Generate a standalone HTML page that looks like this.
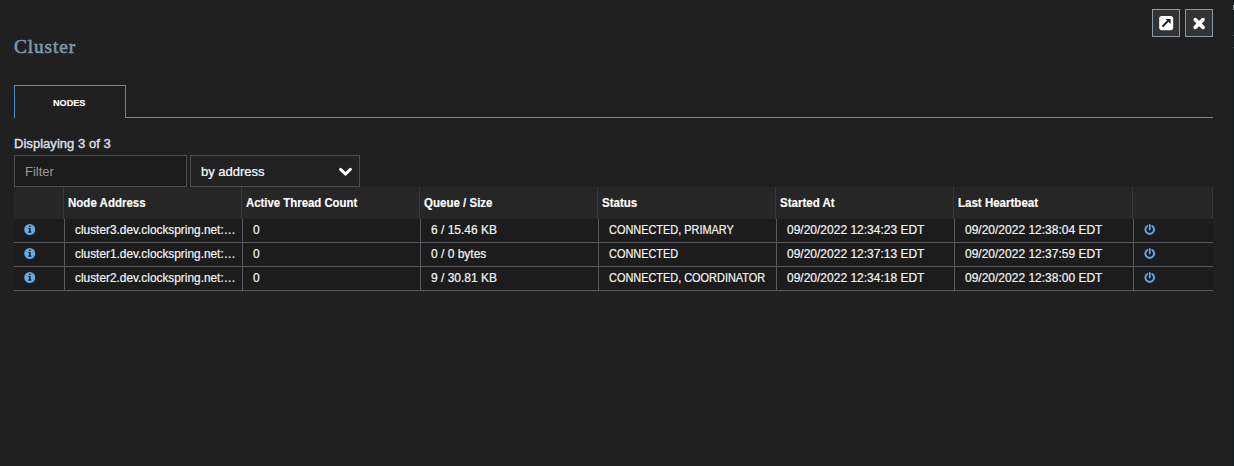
<!DOCTYPE html>
<html><head><meta charset="utf-8">
<style>
*{margin:0;padding:0;box-sizing:border-box}
html,body{width:1234px;height:466px;overflow:hidden;background:#202020;font-family:"Liberation Sans",sans-serif;color:#fff}
.a{position:absolute}
.band{left:0;top:0;width:1234px;height:36px;background:#202020}
.bline{left:0;top:36px;width:1234px;height:1px;background:#1d1d1d}
.edge{left:1233px;top:0;width:1px;height:466px;background:#171c23}
.emk{left:1233px;width:1px;background:#8a8f96}
.title{left:14px;top:34.5px;font-family:"Liberation Serif",serif;font-size:19.3px;letter-spacing:0.9px;-webkit-text-stroke:0.6px #7c9aaa;line-height:24px;color:#7c9aaa;white-space:nowrap}
.btn{top:9px;width:28px;height:28px;background:#333;border:1px solid #8a9ba8}
.tab{left:14px;top:85px;width:112px;height:33px;border:1px solid #4b8fcc;border-bottom:none;background:#202020}
.tabline{left:125px;top:117px;width:1088px;height:1px;background:#4b8fcc}
.tabtxt{-webkit-text-stroke:0.15px #fff;left:53px;top:96.8px;transform:scaleX(.98);transform-origin:0 0;font-size:9.3px;font-weight:bold;line-height:12px;white-space:nowrap}
.disp{left:14px;top:136px;letter-spacing:0.04px;-webkit-text-stroke:0.45px #d9dde0;font-size:13px;line-height:16px;color:#d9dde0;white-space:nowrap}
.filter{left:14px;top:155px;width:173px;height:32px;background:#1b1b1b;border:1px solid #4d4d50}
.ftxt{left:25px;top:164px;font-size:13px;line-height:15px;color:#9a9a9a;white-space:nowrap}
.dd{left:190px;top:155px;width:170px;height:32px;background:#222;border:1px solid #4d4d50}
.ddtxt{left:201px;top:164px;font-size:13px;line-height:15px;color:#fff;-webkit-text-stroke:0.2px #fff;white-space:nowrap}
.hdr{left:14px;top:187px;width:1199px;height:32px;background:#262626}
.hdiv{top:187px;width:1px;height:32px;background:#383838}
.htxt{-webkit-text-stroke:0.15px #fff;top:196px;transform:scaleX(.96);transform-origin:0 0;font-size:12px;font-weight:bold;line-height:14px;white-space:nowrap}
.row{left:14px;width:1199px;height:24px;background:#1c1c1c}
.rline{left:14px;width:1199px;height:1px;background:#5a5a5e}
.ddiv{top:219px;width:1px;height:72px;background:#5a5a5e}
.dtxt{font-size:12px;line-height:14px;white-space:nowrap;color:#f4f4f4;-webkit-text-stroke:0.2px #f4f4f4}
</style></head><body>
<div class="a band"></div>
<div class="a bline"></div>
<div class="a title m">Cluster</div>

<div class="a btn" style="left:1152px"></div>
<div class="a btn" style="left:1185px"></div>
<svg class="a" style="left:1152px;top:9px" width="28" height="28" viewBox="0 0 28 28"><rect x="7.2" y="7" width="14" height="14.2" rx="2.6" fill="#fff"/><path d="M10.4 17.6 L16.2 11.8" stroke="#222" stroke-width="2" stroke-linecap="butt"/><path d="M13.6 10.1 L18.6 10.1 L18.6 15.1 Z" fill="#222"/></svg>
<svg class="a" style="left:1185px;top:9px" width="28" height="28" viewBox="0 0 28 28"><path d="M10.2 10.6 L18.0 18.4 M18.0 10.6 L10.2 18.4" stroke="#fff" stroke-width="3.7" stroke-linecap="round"/></svg>

<div class="a tab"></div>
<div class="a tabline"></div>
<div class="a tabtxt m">NODES</div>

<div class="a disp m">Displaying 3 of 3</div>
<div class="a filter"></div>
<div class="a ftxt m">Filter</div>
<div class="a dd"></div>
<div class="a ddtxt m">by address</div>
<svg class="a" style="left:335px;top:162px" width="22" height="19" viewBox="0 0 22 19"><path d="M5.6 7.3 L10.5 12 L15.4 7.3" fill="none" stroke="#fff" stroke-width="3" stroke-linecap="round" stroke-linejoin="miter"/></svg>

<div class="a hdr"></div>
<div class="a hdiv" style="left:63px"></div>
<div class="a hdiv" style="left:241px"></div>
<div class="a hdiv" style="left:419px"></div>
<div class="a hdiv" style="left:597px"></div>
<div class="a hdiv" style="left:775px"></div>
<div class="a hdiv" style="left:953px"></div>
<div class="a hdiv" style="left:1132px"></div>
<div class="a hdiv" style="left:1212px"></div>
<div class="a htxt m" style="left:68px">Node Address</div>
<div class="a htxt m" style="left:246px;transform:scaleX(.948)">Active Thread Count</div>
<div class="a htxt m" style="left:424px">Queue / Size</div>
<div class="a htxt m" style="left:602px">Status</div>
<div class="a htxt m" style="left:780px">Started At</div>
<div class="a htxt m" style="left:958px">Last Heartbeat</div>

<div class="a row" style="top:219px"></div>
<div class="a rline" style="top:242px"></div>
<div class="a row" style="top:243px"></div>
<div class="a rline" style="top:266px"></div>
<div class="a row" style="top:267px"></div>
<div class="a rline" style="top:290px"></div>
<div class="a ddiv" style="left:64px"></div>
<div class="a ddiv" style="left:242px"></div>
<div class="a ddiv" style="left:420px"></div>
<div class="a ddiv" style="left:598px"></div>
<div class="a ddiv" style="left:776px"></div>
<div class="a ddiv" style="left:954px"></div>
<div class="a ddiv" style="left:1133px"></div>

<div class="a dtxt m" style="transform:scaleX(.988);transform-origin:0 0;left:75px;top:223px">cluster3.dev.clockspring.net:…</div>
<div class="a dtxt m" style="left:253px;top:223px">0</div>
<div class="a dtxt m" style="left:431px;top:223px">6 / 15.46 KB</div>
<div class="a dtxt m" style="transform:scaleX(.91);transform-origin:0 0;left:609px;top:223px">CONNECTED, PRIMARY</div>
<div class="a dtxt m" style="left:787px;top:223px">09/20/2022 12:34:23 EDT</div>
<div class="a dtxt m" style="left:965px;top:223px">09/20/2022 12:38:04 EDT</div>

<div class="a dtxt m" style="transform:scaleX(.988);transform-origin:0 0;left:75px;top:247px">cluster1.dev.clockspring.net:…</div>
<div class="a dtxt m" style="left:253px;top:247px">0</div>
<div class="a dtxt m" style="left:431px;top:247px">0 / 0 bytes</div>
<div class="a dtxt m" style="transform:scaleX(.91);transform-origin:0 0;left:609px;top:247px">CONNECTED</div>
<div class="a dtxt m" style="left:787px;top:247px">09/20/2022 12:37:13 EDT</div>
<div class="a dtxt m" style="left:965px;top:247px">09/20/2022 12:37:59 EDT</div>

<div class="a dtxt m" style="transform:scaleX(.988);transform-origin:0 0;left:75px;top:271px">cluster2.dev.clockspring.net:…</div>
<div class="a dtxt m" style="left:253px;top:271px">0</div>
<div class="a dtxt m" style="left:431px;top:271px">9 / 30.81 KB</div>
<div class="a dtxt m" style="transform:scaleX(.91);transform-origin:0 0;left:609px;top:271px">CONNECTED, COORDINATOR</div>
<div class="a dtxt m" style="left:787px;top:271px">09/20/2022 12:34:18 EDT</div>
<div class="a dtxt m" style="left:965px;top:271px">09/20/2022 12:38:00 EDT</div>

<svg class="a" style="left:20px;top:220px" width="20" height="20" viewBox="0 0 20 20"><circle cx="9.75" cy="9.5" r="5.5" fill="#62aae8"/><rect x="9.0" y="5.6" width="1.6" height="1.4" fill="#1c1c1c"/><path d="M8.3 7.9 H10.6 V11.6 H11.4 V12.8 H8.3 V11.6 H9.1 V9.1 H8.3 Z" fill="#1c1c1c"/></svg>
<svg class="a" style="left:1140px;top:220px" width="20" height="20" viewBox="0 0 20 20"><path d="M12.25 6.0 A4.35 4.35 0 1 1 7.25 6.0" fill="none" stroke="#62aae8" stroke-width="2" stroke-linecap="round"/><path d="M9.75 4.8 V9.6" stroke="#62aae8" stroke-width="1.8" stroke-linecap="round"/></svg>
<svg class="a" style="left:20px;top:244px" width="20" height="20" viewBox="0 0 20 20"><circle cx="9.75" cy="9.5" r="5.5" fill="#62aae8"/><rect x="9.0" y="5.6" width="1.6" height="1.4" fill="#1c1c1c"/><path d="M8.3 7.9 H10.6 V11.6 H11.4 V12.8 H8.3 V11.6 H9.1 V9.1 H8.3 Z" fill="#1c1c1c"/></svg>
<svg class="a" style="left:1140px;top:244px" width="20" height="20" viewBox="0 0 20 20"><path d="M12.25 6.0 A4.35 4.35 0 1 1 7.25 6.0" fill="none" stroke="#62aae8" stroke-width="2" stroke-linecap="round"/><path d="M9.75 4.8 V9.6" stroke="#62aae8" stroke-width="1.8" stroke-linecap="round"/></svg>
<svg class="a" style="left:20px;top:268px" width="20" height="20" viewBox="0 0 20 20"><circle cx="9.75" cy="9.5" r="5.5" fill="#62aae8"/><rect x="9.0" y="5.6" width="1.6" height="1.4" fill="#1c1c1c"/><path d="M8.3 7.9 H10.6 V11.6 H11.4 V12.8 H8.3 V11.6 H9.1 V9.1 H8.3 Z" fill="#1c1c1c"/></svg>
<svg class="a" style="left:1140px;top:268px" width="20" height="20" viewBox="0 0 20 20"><path d="M12.25 6.0 A4.35 4.35 0 1 1 7.25 6.0" fill="none" stroke="#62aae8" stroke-width="2" stroke-linecap="round"/><path d="M9.75 4.8 V9.6" stroke="#62aae8" stroke-width="1.8" stroke-linecap="round"/></svg>
<div class="a edge"></div>
<div class="a emk" style="top:5px;height:5px"></div>
<div class="a emk" style="top:35px;height:1px;background:#555a60"></div>
<div class="a emk" style="top:47px;height:1px;background:#555a60"></div>
</body></html>
